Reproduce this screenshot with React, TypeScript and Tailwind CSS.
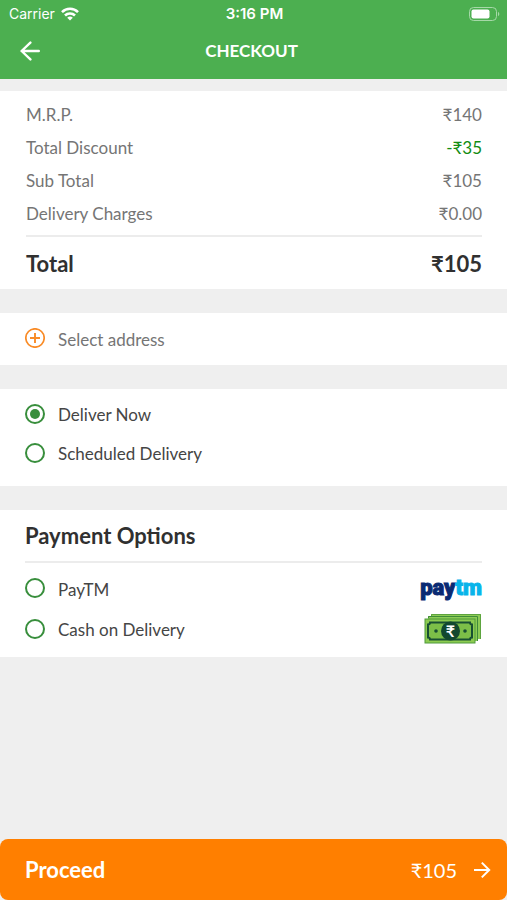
import { useState } from 'react';
import type { ReactNode } from 'react';
import { clsx } from 'clsx';

type PriceLine = { label: string; amount: string; discount?: boolean };

const priceLines: PriceLine[] = [
  { label: 'M.R.P.', amount: '₹140' },
  { label: 'Total Discount', amount: '-₹35', discount: true },
  { label: 'Sub Total', amount: '₹105' },
  { label: 'Delivery Charges', amount: '₹0.00' },
];

function WifiIcon() {
  return (
    <svg width="18" height="14" viewBox="0 0 18 14" fill="none" stroke="#fff" strokeWidth="2.6" aria-hidden="true">
      <path d="M1 5.1a11.4 11.4 0 0 1 16 0" />
      <path d="M4 8.5a7.1 7.1 0 0 1 10 0" />
      <path d="M9 13.6 6.2 10.8a4 4 0 0 1 5.6 0z" fill="#fff" stroke="none" />
    </svg>
  );
}

function BatteryIcon() {
  return (
    <svg width="31" height="14" viewBox="0 0 31 14" fill="none" aria-hidden="true">
      <rect x="0.5" y="0.5" width="27" height="13" rx="4" stroke="#a6d8a8" />
      <rect x="2.5" y="2.5" width="18" height="9" rx="2" fill="#fff" />
      <path d="M29 4.8c1.8.7 1.8 3.7 0 4.4z" fill="#a6d8a8" />
    </svg>
  );
}

function BackArrow() {
  return (
    <svg width="20" height="20" viewBox="0 0 20 20" fill="none" stroke="#fff" strokeWidth="2.4" strokeLinecap="round" strokeLinejoin="round" aria-hidden="true">
      <path d="M18.8 10H1.6M10.4 1.6 1.6 10l8.8 8.4" />
    </svg>
  );
}

function ForwardArrow() {
  return (
    <svg width="18" height="18" viewBox="0 0 18 18" fill="none" stroke="#fff" strokeWidth="2" aria-hidden="true">
      <path d="M1 9h15M8.8 1.6 16.2 9l-7.4 7.4" />
    </svg>
  );
}

function PlusCircle() {
  return (
    <svg width="20" height="20" viewBox="0 0 20 20" fill="none" stroke="#f98b26" aria-hidden="true">
      <circle cx="10" cy="10" r="9.2" strokeWidth="1.7" />
      <path d="M10 5v10M5 10h10" strokeWidth="1.9" />
    </svg>
  );
}

function PaytmLogo() {
  return (
    <span className="font-['Roboto',sans-serif] text-[22px] leading-6 font-black text-[#0a2a73] [-webkit-text-stroke:1px]">
      pay<span className="text-[#08b4ea]">tm</span>
    </span>
  );
}

function CashIcon() {
  return (
    <svg width="58" height="32" viewBox="0 0 58 32" aria-hidden="true">
      <rect x="7" y="1" width="50" height="25" fill="#8dcb55" />
      <path d="M7.5 3V1.5h49V26" fill="none" stroke="#5da43f" />
      <rect x="4" y="3" width="50" height="25" fill="#8dcb55" />
      <path d="M4.5 5V3.5h49V28" fill="none" stroke="#3f8b3a" />
      <rect x="1" y="6" width="50" height="24" fill="#8ccb50" stroke="#4f9a3c" />
      <path d="M6 9.5h40q0 2 2 2v13q-2 0-2 2H6q0-2-2-2v-13q2 0 2-2z" fill="#7cbf48" stroke="#185033" strokeWidth="2" />
      <circle cx="12" cy="18" r="1.8" fill="#185033" />
      <circle cx="41" cy="18" r="1.8" fill="#185033" />
      <circle cx="26.5" cy="18" r="9.5" fill="#12482f" />
      <text x="26.5" y="23.500" textAnchor="middle" fill="#fff" className="font-['Lato',sans-serif] text-[16px] font-bold">
        {'₹'}
      </text>
    </svg>
  );
}

function RadioRow({
  name,
  label,
  checked,
  onSelect,
  className,
  children,
}: {
  name: string;
  label: string;
  checked: boolean;
  onSelect: () => void;
  className?: string;
  children?: ReactNode;
}) {
  return (
    <label className={clsx('flex cursor-pointer items-center text-[#454545]', className)}>
      <input
        type="radio"
        name={name}
        checked={checked}
        onChange={onSelect}
        className="mr-[13px] grid size-5 shrink-0 appearance-none place-items-center rounded-full border-2 border-[#388e3c] checked:before:size-[10px] checked:before:rounded-full checked:before:bg-[#388e3c] checked:before:content-['']"
      />
      <span className="grow pt-[3px]">{label}</span>
      {children}
    </label>
  );
}

export default function App() {
  const [delivery, setDelivery] = useState('now');
  const [payment, setPayment] = useState('');

  return (
    <div className="flex min-h-screen flex-col bg-[#efefef] font-['Lato',sans-serif] text-[17px] leading-6">
      <header className="bg-[#4caf50] text-white">
        <div className="grid grid-cols-3 items-center pt-1 pr-[7px] pl-[9px] font-['Inter',sans-serif] text-[14px] leading-5">
          <div className="flex items-center gap-1.5">
            <span>Carrier</span>
            <WifiIcon />
          </div>
          <span className="text-center text-[15px] font-semibold">3:16 PM</span>
          <div className="flex justify-end">
            <BatteryIcon />
          </div>
        </div>
        <div className="grid h-[55px] grid-cols-3 items-center pr-6 pb-[2px] pl-5">
          <button type="button" aria-label="Back" className="justify-self-start">
            <BackArrow />
          </button>
          <h1 className="text-center font-bold">CHECKOUT</h1>
        </div>
      </header>

      <main className="mt-3 flex grow flex-col gap-6">
        <section className="bg-white pt-[7px] pr-[25px] pl-[26px]">
          <dl>
            {priceLines.map((line) => (
              <div key={line.label} className="flex h-[33px] items-center justify-between text-[#757575]">
                <dt>{line.label}</dt>
                <dd className={clsx(line.discount && 'text-[#128c12]')}>{line.amount}</dd>
              </div>
            ))}
            <div className="mt-[5px] flex items-center justify-between border-t-2 border-[#ececec] pt-[13px] pb-[11px] text-[22px] leading-7 font-bold text-[#303030]">
              <dt>Total</dt>
              <dd>{'₹105'}</dd>
            </div>
          </dl>
        </section>

        <section className="bg-white">
          <button type="button" className="flex h-[52px] w-full items-center gap-[13px] px-[25px] pb-[2px] text-left text-[#757575]">
            <PlusCircle />
            <span className="pt-[3px]">Select address</span>
          </button>
        </section>

        <section className="bg-white px-[25px] pt-[5px] pb-[14px]">
          <RadioRow name="delivery" label="Deliver Now" checked={delivery === 'now'} onSelect={() => setDelivery('now')} className="h-[39px]" />
          <RadioRow name="delivery" label="Scheduled Delivery" checked={delivery === 'later'} onSelect={() => setDelivery('later')} className="h-[39px]" />
        </section>

        <section className="bg-white px-[25px] pb-2">
          <h2 className="border-b-2 border-[#ececec] pt-3 pb-[11px] text-[22px] leading-7 font-bold text-[#303030]">Payment Options</h2>
          <div className="pt-[5px]">
            <RadioRow name="payment" label="PayTM" checked={payment === 'paytm'} onSelect={() => setPayment('paytm')} className="h-10">
              <PaytmLogo />
            </RadioRow>
            <RadioRow name="payment" label="Cash on Delivery" checked={payment === 'cod'} onSelect={() => setPayment('cod')} className="h-[41px]">
              <CashIcon />
            </RadioRow>
          </div>
        </section>
      </main>

      <button type="button" className="flex h-[61px] items-center rounded-lg bg-[#ff7f00] pr-4 pl-[25px] text-white">
        <span className="grow text-left text-[22px] font-bold">Proceed</span>
        <span className="mr-4 text-[20px]">{'₹105'}</span>
        <ForwardArrow />
      </button>
    </div>
  );
}
